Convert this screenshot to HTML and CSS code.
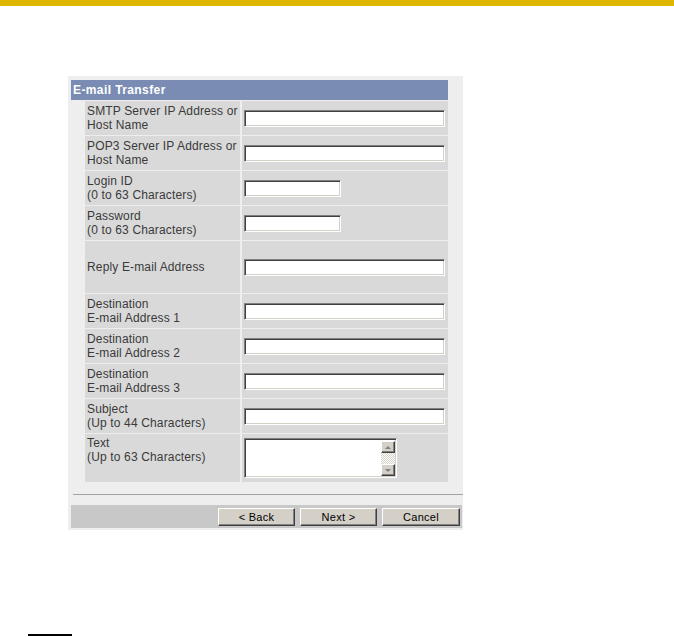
FILE: index.html
```html
<!DOCTYPE html>
<html>
<head>
<meta charset="utf-8">
<link rel="stylesheet" href="styles.css">
</head>
<body>
<div class="topbar"></div>
<div class="page">
  <div class="panel">
    <div class="header">E-mail Transfer</div>
    <div class="rows">
      <div class="label r34">SMTP Server IP Address or<br>Host Name</div>
      <div class="cell"><input class="field wide" type="text"></div>

      <div class="label r34">POP3 Server IP Address or<br>Host Name</div>
      <div class="cell"><input class="field wide" type="text"></div>

      <div class="label r34">Login ID<br>(0 to 63 Characters)</div>
      <div class="cell"><input class="field short" type="text"></div>

      <div class="label r34">Password<br>(0 to 63 Characters)</div>
      <div class="cell"><input class="field short" type="password"></div>

      <div class="label r52">Reply E-mail Address</div>
      <div class="cell"><input class="field wide" type="text"></div>

      <div class="label r34">Destination<br>E-mail Address 1</div>
      <div class="cell"><input class="field wide" type="text"></div>

      <div class="label r34">Destination<br>E-mail Address 2</div>
      <div class="cell"><input class="field wide" type="text"></div>

      <div class="label r34">Destination<br>E-mail Address 3</div>
      <div class="cell"><input class="field wide" type="text"></div>

      <div class="label r34">Subject<br>(Up to 44 Characters)</div>
      <div class="cell"><input class="field wide" type="text"></div>

      <div class="label r48 top">Text<br>(Up to 63 Characters)</div>
      <div class="cell">
        <div class="textbox">
          <div class="textarea-body"></div>
          <div class="scrollbar">
            <div class="sbtn"><span class="tri up"></span></div>
            <div class="track"></div>
            <div class="sbtn"><span class="tri down"></span></div>
          </div>
        </div>
      </div>
    </div>
    <div class="divider"></div>
    <div class="buttonbar">
      <button class="btn">&lt; Back</button>
      <button class="btn">Next &gt;</button>
      <button class="btn">Cancel</button>
    </div>
  </div>
</div>
<div class="footline"></div>
</body>
</html>
```
FILE: styles.css
```css
html, body {
  margin: 0;
  padding: 0;
  background: #ffffff;
  font-family: "Liberation Sans", Arial, sans-serif;
}

.topbar {
  height: 6px;
  background: #dfb700;
}

.page {
  padding: 70px 0 0 68px;
}

.panel {
  width: 392px;
  padding: 4px 0 2px 3px;
  background: #eeeeee;
}

.header {
  width: 375px;
  height: 20px;
  padding-left: 2px;
  background: #7a8cb4;
  color: #ffffff;
  font-weight: bold;
  font-size: 12px;
  letter-spacing: 0.4px;
  line-height: 20px;
}

.rows {
  margin: 1px 0 0 14px;
  width: 363px;
  display: grid;
  grid-template-columns: 155px 206px;
  column-gap: 2px;
  row-gap: 1px;
}

.label {
  background: #d9d9d9;
  color: #3a3a3a;
  font-size: 12px;
  letter-spacing: 0.15px;
  line-height: 14px;
  padding-left: 2px;
  display: flex;
  align-items: center;
}

.label.top {
  align-items: flex-start;
  padding-top: 2px;
  box-sizing: border-box;
}

.r34 { height: 34px; }
.r52 { height: 52px; }
.r48 { height: 48px; }

.cell {
  background: #d9d9d9;
  display: flex;
  align-items: center;
  padding-left: 2px;
}

.field {
  box-sizing: border-box;
  height: 17px;
  padding: 0;
  margin: 0;
  background: #ffffff;
  border: 1px solid;
  border-color: #808080 #ffffff #ffffff #808080;
  box-shadow: inset 1px 1px 0 #404040, inset -1px -1px 0 #d4d0c8;
  outline: none;
}

.wide { width: 201px; }
.short { width: 97px; }

.textbox {
  box-sizing: border-box;
  width: 153px;
  height: 40px;
  display: flex;
  background: #ffffff;
  border: 1px solid;
  border-color: #808080 #ffffff #ffffff #808080;
  box-shadow: inset 1px 1px 0 #404040, inset -1px -1px 0 #d4d0c8;
  padding: 2px 1px 1px 2px;
}

.textarea-body {
  flex: 1;
}

.scrollbar {
  width: 14px;
  display: flex;
  flex-direction: column;
}

.sbtn {
  box-sizing: border-box;
  height: 12px;
  background: #d4d0c8;
  border: 1px solid;
  border-color: #ffffff #404040 #404040 #ffffff;
  box-shadow: inset -1px -1px 0 #808080;
  display: flex;
  align-items: center;
  justify-content: center;
}

.tri {
  width: 0;
  height: 0;
  border-left: 3px solid transparent;
  border-right: 3px solid transparent;
}

.tri.up { border-bottom: 3px solid #808080; }
.tri.down { border-top: 3px solid #808080; }

.track {
  flex: 1;
  background: repeating-conic-gradient(#ffffff 0 25%, #d4d0c8 0 50%) 0 0 / 2px 2px;
}

.divider {
  margin: 12px 0 0 2px;
  width: 390px;
  height: 1px;
  background: #a3a3a3;
}

.buttonbar {
  margin-top: 10px;
  width: 389px;
  height: 23px;
  padding-right: 2px;
  background: #c8c8c8;
  display: flex;
  justify-content: flex-end;
  align-items: flex-start;
  gap: 5px;
}

.btn {
  box-sizing: border-box;
  margin-top: 3px;
  width: 77px;
  height: 18px;
  padding: 0;
  background: #d4d0c8;
  border: 1px solid;
  border-color: #ffffff #404040 #404040 #ffffff;
  box-shadow: inset -1px -1px 0 #808080;
  font-family: "Liberation Sans", Arial, sans-serif;
  font-size: 11px;
  letter-spacing: 0.3px;
  color: #000000;
  line-height: 14px;
}

.btn:last-child {
  width: 78px;
}

.footline {
  margin: 104px 0 0 28px;
  width: 44px;
  height: 2px;
  background: #000000;
}
```
